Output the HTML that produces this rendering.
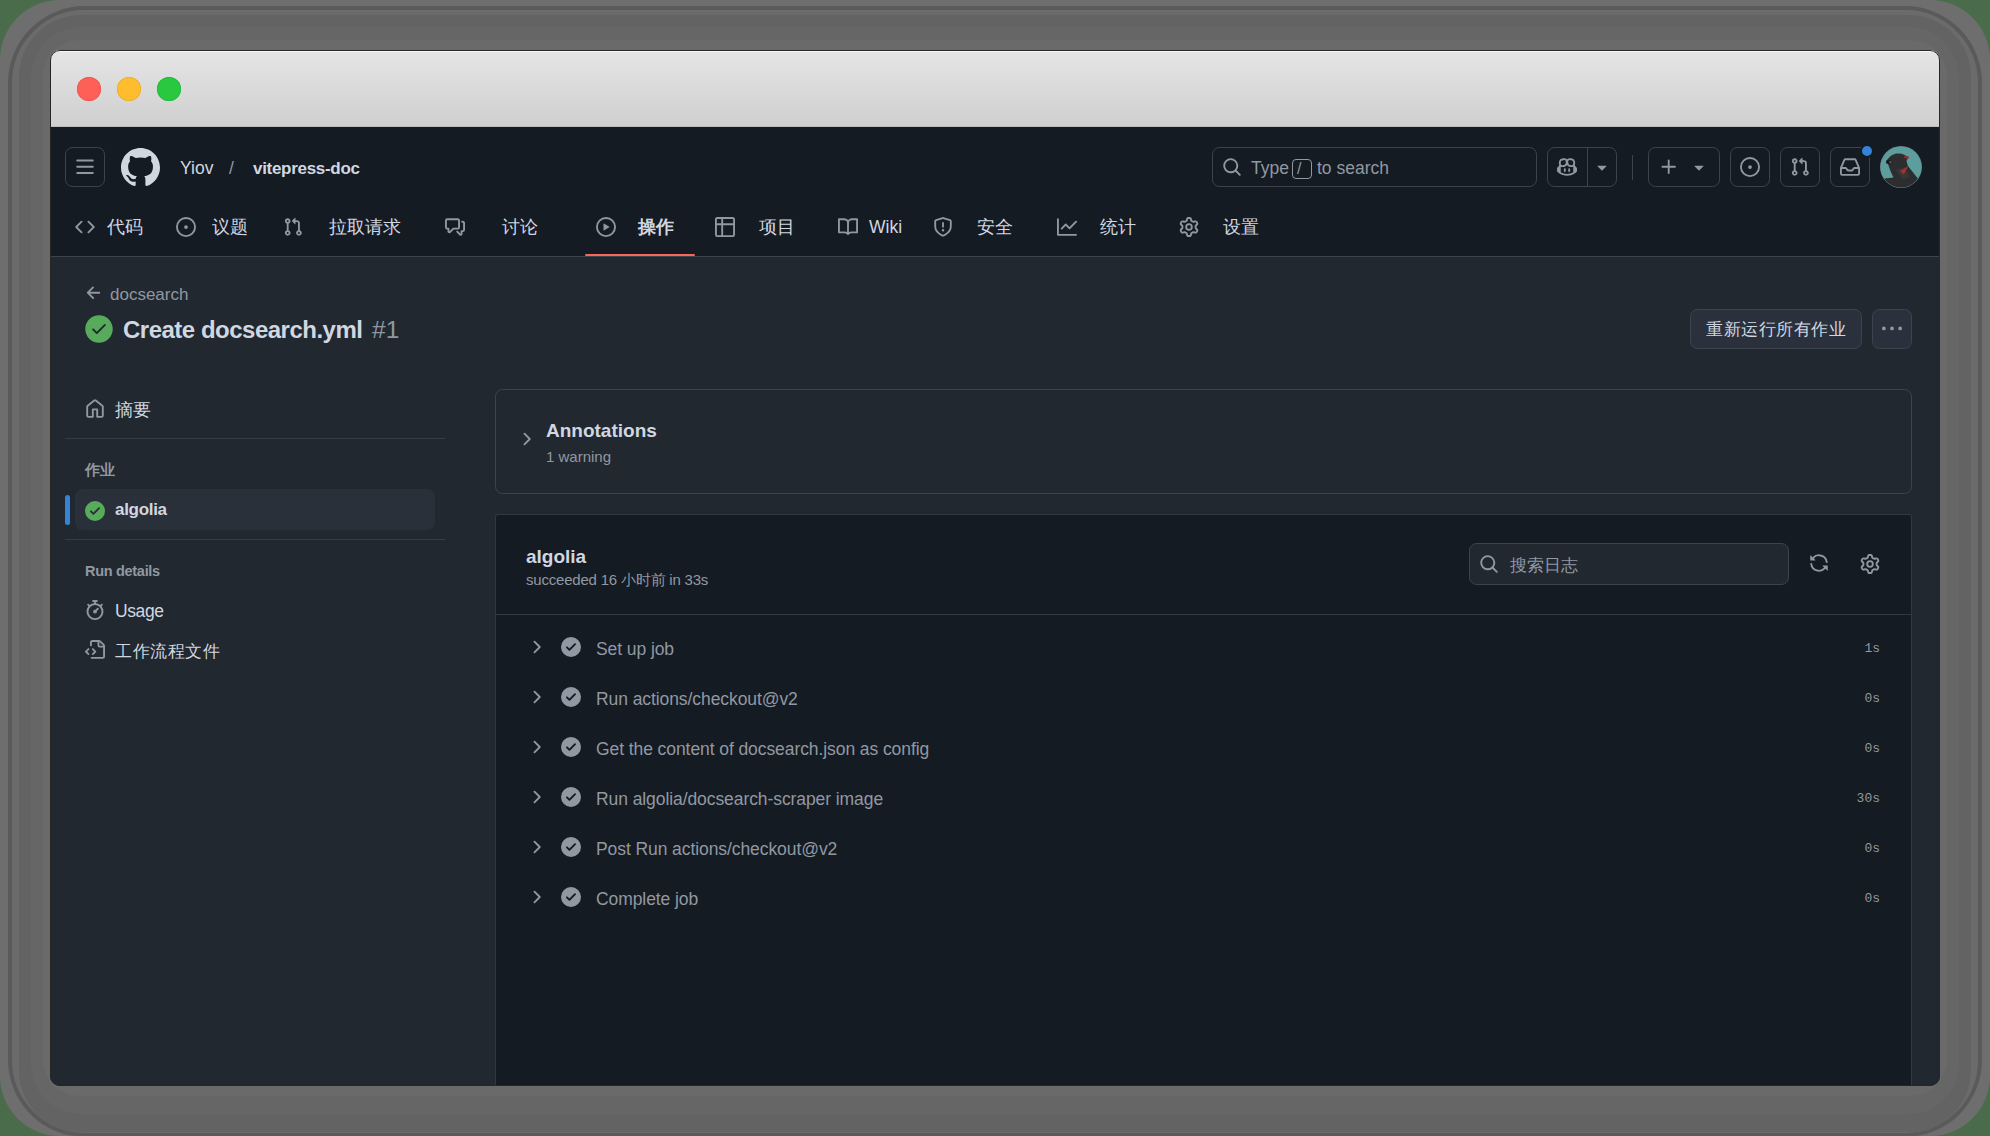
<!DOCTYPE html>
<html><head><meta charset="utf-8">
<style>
*{box-sizing:border-box;margin:0;padding:0}
html,body{width:1990px;height:1136px;overflow:hidden;background:#4b6c4b;font-family:"Liberation Sans",sans-serif}
#outer{position:absolute;left:0;top:0;width:1990px;height:1136px;border-radius:60px;background:#6e6e6e}
.lay{position:absolute}
#win{position:absolute;left:50px;top:50px;width:1890px;height:1036px;border-radius:10px;overflow:hidden;background:#212830;}
#wb{position:absolute;left:50px;top:50px;width:1890px;height:1036px;border-radius:10px;border:1px solid #262626}
#title{position:absolute;left:0;top:0;width:1890px;height:77px;background:linear-gradient(#e5e5e5,#cfcfcf);box-shadow:inset 0 2px 0 #f7f7f7,inset 0 -1px 0 #bdbdbd}
.tl{position:absolute;top:27px;width:24px;height:24px;border-radius:50%}
#hdr{position:absolute;left:0;top:77px;width:1890px;height:130px;background:#151b23;border-bottom:1px solid #3d444d}
.t{position:absolute;white-space:nowrap;line-height:1}
.fg{color:#d1d7e0}
.mu{color:#9198a1}
svg{position:absolute;display:block}
.btn{position:absolute;border:1px solid #3d444d;border-radius:7.5px}
.ic{fill:#9198a1}
</style></head>
<body>
<div id="outer"></div>
<div class="lay" style="left:12px;top:11px;width:1966px;height:1123px;border-radius:70px;background:#6b6b6b"></div>
<div class="lay" style="left:19px;top:15px;width:1952px;height:1117px;border-radius:62px;background:#636363"></div>
<div class="lay" style="left:31px;top:27px;width:1928px;height:1087px;border-radius:50px;background:#666666"></div>
<div class="lay" style="left:43px;top:40px;width:1904px;height:1056px;border-radius:36px;background:#6a6a6a"></div>
<div class="lay" style="left:8px;top:6px;width:1974px;height:1131px;border-radius:77px;border:4px solid #5a5a5a"></div>
<div id="win">
  <div id="title">
    <div class="tl" style="left:27px;background:#fe5f57;box-shadow:inset 0 0 0 0.7px #e8564e"></div>
    <div class="tl" style="left:67px;background:#febc2e;box-shadow:inset 0 0 0 0.7px #e6ac2a"></div>
    <div class="tl" style="left:107px;background:#28c840;box-shadow:inset 0 0 0 0.7px #24b53a"></div>
  </div>
  <div id="hdr"></div>
  <!-- log box -->
  <div style="position:absolute;left:445px;top:464px;width:1417px;height:600px;background:#151b23;border:1px solid rgba(61,68,77,0.7);border-radius:3px 3px 0 0"></div>
  <div style="position:absolute;left:445px;top:339px;width:1417px;height:105px;border:1px solid #3d444d;border-radius:7.5px"></div>
</div>

<div id="wb"></div>
<!-- HEADER -->
<div class="btn" style="left:65px;top:147px;width:40px;height:40px"></div>
<svg style="left:75px;top:157px" width="20" height="20" viewBox="0 0 16 16" class="ic"><path d="M1 2.75A.75.75 0 0 1 1.75 2h12.5a.75.75 0 0 1 0 1.5H1.75A.75.75 0 0 1 1 2.75Zm0 5A.75.75 0 0 1 1.75 7h12.5a.75.75 0 0 1 0 1.5H1.75A.75.75 0 0 1 1 7.75ZM1.75 12h12.5a.75.75 0 0 1 0 1.5H1.75a.75.75 0 0 1 0-1.5Z"/></svg>
<svg style="left:121px;top:148px" width="39" height="39" viewBox="0 0 16 16" fill="#d1d7e0"><path d="M8 0c4.42 0 8 3.58 8 8a8.013 8.013 0 0 1-5.45 7.590c-.4.08-.55-.17-.55-.38 0-.27.01-1.13.01-2.2 0-.75-.25-1.23-.54-1.48 1.78-.2 3.650-.88 3.650-3.950 0-.88-.31-1.590-.82-2.150.08-.2.36-1.020-.08-2.120 0 0-.67-.22-2.2.82-.64-.18-1.320-.27-2-.27-.68 0-1.360.09-2 .27-1.530-1.030-2.2-.82-2.2-.82-.44 1.1-.16 1.920-.08 2.120-.51.56-.82 1.280-.82 2.150 0 3.060 1.860 3.750 3.640 3.950-.23.2-.44.55-.51 1.070-.46.21-1.610.55-2.330-.66-.15-.24-.6-.83-1.230-.82-.67.01-.27.38.01.53.34.19.73.9.82 1.130.16.45.68 1.310 2.690.94 0 .67.01 1.3.01 1.490 0 .21-.15.45-.55.38A7.995 7.995 0 0 1 0 8c0-4.420 3.580-8 8-8Z"/></svg>
<div class="t fg" style="left:180px;top:160px;font-size:17.5px">Yiov</div>
<div class="t mu" style="left:229px;top:160px;font-size:17.5px">/</div>
<div class="t fg" style="left:253px;top:160px;font-size:17px;font-weight:700;letter-spacing:-0.3px">vitepress-doc</div>

<!-- search -->
<div class="btn" style="left:1212px;top:147px;width:325px;height:40px"></div>
<svg style="left:1222px;top:157px" width="20" height="20" viewBox="0 0 16 16" class="ic"><path d="M10.68 11.74a6 6 0 0 1-7.922-8.982 6 6 0 0 1 8.982 7.922l3.04 3.04a.749.749 0 0 1-.326 1.275.749.749 0 0 1-.734-.215ZM11.5 7a4.499 4.499 0 1 0-8.997 0A4.499 4.499 0 0 0 11.5 7Z"/></svg>
<div class="t mu" style="left:1251px;top:160px;font-size:17.5px">Type</div>
<div style="position:absolute;left:1292px;top:159px;width:20px;height:20px;border:1px solid #9198a1;border-radius:4px"></div>
<div class="t mu" style="left:1297px;top:161px;font-size:16px">/</div>
<div class="t mu" style="left:1317px;top:160px;font-size:17.5px">to search</div>

<div class="btn" style="left:1547px;top:147px;width:70px;height:40px"></div>
<div style="position:absolute;left:1587px;top:148px;width:1px;height:38px;background:#3d444d"></div>
<svg style="left:1557px;top:157px" width="20" height="20" viewBox="0 0 16 16" class="ic"><path d="M7.998 15.035c-4.562 0-7.873-2.914-7.998-3.749V9.338c.085-.628.677-1.686 1.588-2.065.013-.07.024-.143.036-.218.029-.183.06-.384.126-.612-.201-.508-.254-1.084-.254-1.656 0-.87.128-1.769.693-2.484.579-.733 1.494-1.124 2.724-1.261 1.206-.134 2.262.034 2.944.765.05.053.096.108.139.165.044-.057.094-.112.143-.165.682-.731 1.738-.899 2.944-.765 1.23.137 2.145.528 2.724 1.261.566.715.693 1.614.693 2.484 0 .572-.053 1.148-.254 1.656.066.228.098.429.126.612.012.076.024.148.037.218.924.385 1.522 1.471 1.591 2.095v1.872c0 .766-3.351 3.795-8.002 3.795Zm0-1.485c2.28 0 4.584-1.11 5.002-1.433V7.862l-.023-.116c-.49.21-1.075.291-1.727.291-1.146 0-2.059-.327-2.71-.991A3.222 3.222 0 0 1 8 6.303a3.24 3.24 0 0 1-.544.743c-.65.664-1.563.991-2.71.991-.652 0-1.236-.081-1.727-.291l-.023.116v4.255c.419.323 2.722 1.433 5.002 1.433ZM6.762 2.83c-.193-.206-.637-.413-1.682-.297-1.019.113-1.479.404-1.713.7-.247.312-.369.789-.369 1.554 0 .793.129 1.171.308 1.371.162.181.519.379 1.442.379.853 0 1.339-.235 1.638-.54.315-.322.527-.827.617-1.553.117-.935-.037-1.395-.241-1.614Zm4.155-.297c-1.044-.116-1.488.091-1.681.297-.204.219-.359.679-.242 1.614.091.726.303 1.231.618 1.553.299.305.784.54 1.638.54.922 0 1.280-.198 1.442-.379.179-.2.308-.578.308-1.371 0-.765-.123-1.242-.37-1.554-.233-.296-.693-.587-1.713-.7Z"/><path d="M6.25 9.037a.75.75 0 0 1 .75.75v1.501a.75.75 0 0 1-1.5 0V9.787a.75.75 0 0 1 .75-.75Zm4.25.75v1.501a.75.75 0 0 1-1.5 0V9.787a.75.75 0 0 1 1.5 0Z"/></svg>
<svg style="left:1592px;top:157px" width="20" height="20" viewBox="0 0 16 16" class="ic"><path d="m4.427 7.427 3.396 3.396a.25.25 0 0 0 .354 0l3.396-3.396A.25.25 0 0 0 11.396 7H4.604a.25.25 0 0 0-.177.427Z"/></svg>
<div style="position:absolute;left:1632px;top:155px;width:1px;height:25px;background:#3d444d"></div>

<div class="btn" style="left:1648px;top:147px;width:72px;height:40px"></div>
<svg style="left:1659px;top:157px" width="20" height="20" viewBox="0 0 16 16" class="ic"><path d="M7.75 2a.75.75 0 0 1 .75.75V7h4.250a.75.75 0 0 1 0 1.5H8.5v4.250a.75.75 0 0 1-1.5 0V8.5H2.750a.75.75 0 0 1 0-1.5H7V2.750A.75.75 0 0 1 7.75 2Z"/></svg>
<svg style="left:1689px;top:157px" width="20" height="20" viewBox="0 0 16 16" class="ic"><path d="m4.427 7.427 3.396 3.396a.25.25 0 0 0 .354 0l3.396-3.396A.25.25 0 0 0 11.396 7H4.604a.25.25 0 0 0-.177.427Z"/></svg>

<div class="btn" style="left:1730px;top:147px;width:40px;height:40px"></div>
<svg style="left:1740px;top:157px" width="20" height="20" viewBox="0 0 16 16" class="ic"><path d="M8 9.5a1.5 1.5 0 1 0 0-3 1.5 1.5 0 0 0 0 3Z"/><path d="M8 0a8 8 0 1 1 0 16A8 8 0 0 1 8 0ZM1.5 8a6.5 6.5 0 1 0 13 0 6.5 6.5 0 0 0-13 0Z"/></svg>
<div class="btn" style="left:1780px;top:147px;width:40px;height:40px"></div>
<svg style="left:1790px;top:157px" width="20" height="20" viewBox="0 0 16 16" class="ic"><path d="M1.5 3.25a2.25 2.25 0 1 1 3 2.122v5.256a2.251 2.251 0 1 1-1.5 0V5.372A2.25 2.25 0 0 1 1.5 3.25Zm5.677-.177L9.573.677A.25.25 0 0 1 10 .854V2.5h1A2.5 2.5 0 0 1 13.5 5v5.628a2.251 2.251 0 1 1-1.5 0V5a1 1 0 0 0-1-1h-1v1.646a.25.25 0 0 1-.427.177L7.177 3.427a.25.25 0 0 1 0-.354ZM3.75 2.5a.75.75 0 1 0 0 1.5.75.75 0 0 0 0-1.5Zm0 9.5a.75.75 0 1 0 0 1.5.75.75 0 0 0 0-1.5Zm8.25.75a.75.75 0 1 0 1.5 0 .75.75 0 0 0-1.5 0Z"/></svg>
<div class="btn" style="left:1830px;top:147px;width:40px;height:40px"></div>
<svg style="left:1840px;top:157px" width="20" height="20" viewBox="0 0 16 16" class="ic"><path d="M2.8 2.06A1.75 1.75 0 0 1 4.41 1h7.18c.7 0 1.333.417 1.61 1.06l2.74 6.395c.04.093.06.194.06.295v4.5A1.75 1.75 0 0 1 14.25 15H1.75A1.75 1.75 0 0 1 0 13.25v-4.5c0-.101.02-.202.06-.295Zm1.61.44a.25.25 0 0 0-.23.152L1.887 8H4.75a.75.75 0 0 1 .6.3L6.625 10h2.75l1.275-1.7a.75.75 0 0 1 .6-.3h2.863L11.82 2.652a.25.25 0 0 0-.23-.152Zm10.09 7h-2.875l-1.275 1.7a.75.75 0 0 1-.6.3h-3.5a.75.75 0 0 1-.6-.3L4.375 9.5H1.5v3.75c0 .138.112.25.25.25h12.5a.25.25 0 0 0 .25-.25Z"/></svg>
<div style="position:absolute;left:1860px;top:144px;width:14px;height:14px;border-radius:50%;background:#3483d9;border:2px solid #151b23"></div>
<svg style="left:1880px;top:146px" width="42" height="42" viewBox="0 0 42 42">
<defs><clipPath id="avc"><circle cx="21" cy="21" r="20.5"/></clipPath></defs>
<circle cx="21" cy="21" r="21" fill="#6f747c"/>
<g clip-path="url(#avc)">
<rect width="42" height="42" fill="#5c9e9e"/>
<path d="M6.5 15 C8 12 12 8 17 7.5 C22 7 26 9 28 11.5 L26.5 15 C27 17 27.5 18.5 28 20 L37 31.5 L42 36 L42 42 L0 42 L0 33 L13.5 31.5 C11 27 9.5 22 8.2 18.5 Z" fill="#2d2d2f"/>
<path d="M15.5 24 L25 21 L30 31 L23 34 Z" fill="#363638"/>
<path d="M20.1 24.9 L28.4 19.9 L23.8 28.6 Z" fill="#a5302c"/>
<path d="M24 10 L29 10.5 L28.5 12.8 L24 12 Z" fill="#8e2f2a"/>
<rect x="6.2" y="14.6" width="4.8" height="3" fill="#111"/>
<rect x="9.4" y="15.6" width="1.6" height="1" fill="#aaa"/>
</g>
</svg>

<!-- NAV -->
<svg style="left:75px;top:217px" width="20" height="20" viewBox="0 0 16 16" class="ic"><path d="m11.28 3.22 4.25 4.25a.75.75 0 0 1 0 1.06l-4.25 4.25a.749.749 0 0 1-1.275-.326.749.749 0 0 1 .215-.734L13.94 8l-3.72-3.72a.749.749 0 0 1 .326-1.275.749.749 0 0 1 .734.215Zm-6.56 0a.751.751 0 0 1 1.042.018.751.751 0 0 1 .018 1.042L2.06 8l3.72 3.72a.749.749 0 0 1-.326 1.275.749.749 0 0 1-.734-.215L.47 8.53a.75.75 0 0 1 0-1.06Z"/></svg>
<div class="t fg" style="left:107px;top:219px;font-size:17.5px">代码</div>
<svg style="left:176px;top:217px" width="20" height="20" viewBox="0 0 16 16" class="ic"><path d="M8 9.5a1.5 1.5 0 1 0 0-3 1.5 1.5 0 0 0 0 3Z"/><path d="M8 0a8 8 0 1 1 0 16A8 8 0 0 1 8 0ZM1.5 8a6.5 6.5 0 1 0 13 0 6.5 6.5 0 0 0-13 0Z"/></svg>
<div class="t fg" style="left:212px;top:219px;font-size:17.5px">议题</div>
<svg style="left:283px;top:217px" width="20" height="20" viewBox="0 0 16 16" class="ic"><path d="M1.5 3.25a2.25 2.25 0 1 1 3 2.122v5.256a2.251 2.251 0 1 1-1.5 0V5.372A2.25 2.25 0 0 1 1.5 3.25Zm5.677-.177L9.573.677A.25.25 0 0 1 10 .854V2.5h1A2.5 2.5 0 0 1 13.5 5v5.628a2.251 2.251 0 1 1-1.5 0V5a1 1 0 0 0-1-1h-1v1.646a.25.25 0 0 1-.427.177L7.177 3.427a.25.25 0 0 1 0-.354ZM3.75 2.5a.75.75 0 1 0 0 1.5.75.75 0 0 0 0-1.5Zm0 9.5a.75.75 0 1 0 0 1.5.75.75 0 0 0 0-1.5Zm8.25.75a.75.75 0 1 0 1.5 0 .75.75 0 0 0-1.5 0Z"/></svg>
<div class="t fg" style="left:329px;top:219px;font-size:17.5px">拉取请求</div>
<svg style="left:445px;top:217px" width="20" height="20" viewBox="0 0 16 16" class="ic"><path d="M1.75 1h8.5c.966 0 1.75.784 1.75 1.75v5.5A1.75 1.75 0 0 1 10.25 10H7.061l-2.574 2.573A1.458 1.458 0 0 1 2 11.543V10h-.25A1.75 1.75 0 0 1 0 8.25v-5.5C0 1.784.784 1 1.75 1ZM1.5 2.75v5.5c0 .138.112.25.25.25h1a.75.75 0 0 1 .75.75v2.19l2.72-2.72a.749.749 0 0 1 .53-.22h3.5a.25.25 0 0 0 .25-.25v-5.5a.25.25 0 0 0-.25-.25h-8.5a.25.25 0 0 0-.25.25Zm13 2a.25.25 0 0 0-.25-.25h-.5a.75.75 0 0 1 0-1.5h.5c.966 0 1.75.784 1.75 1.75v5.5A1.75 1.75 0 0 1 14.25 12H14v1.543a1.458 1.458 0 0 1-2.487 1.03L9.22 12.28a.749.749 0 0 1 .326-1.275.749.749 0 0 1 .734.215l2.22 2.22v-2.19a.75.75 0 0 1 .75-.75h1a.25.25 0 0 0 .25-.25Z"/></svg>
<div class="t fg" style="left:502px;top:219px;font-size:17.5px">讨论</div>
<svg style="left:596px;top:217px" width="20" height="20" viewBox="0 0 16 16" class="ic"><path d="M8 0a8 8 0 1 1 0 16A8 8 0 0 1 8 0ZM1.5 8a6.5 6.5 0 1 0 13 0 6.5 6.5 0 0 0-13 0Zm4.879-2.773 4.264 2.559a.25.25 0 0 1 0 .428l-4.264 2.559A.25.25 0 0 1 6 10.559V5.442a.25.25 0 0 1 .379-.215Z"/></svg>
<div class="t fg" style="left:638px;top:219px;font-size:17.5px;font-weight:700">操作</div>
<div style="position:absolute;left:585px;top:253.5px;width:110px;height:2.6px;border-radius:2px;background:#f8675a"></div>
<svg style="left:715px;top:217px" width="20" height="20" viewBox="0 0 16 16" class="ic"><path d="M0 1.75C0 .784.784 0 1.75 0h12.5C15.216 0 16 .784 16 1.75v12.5A1.75 1.75 0 0 1 14.25 16H1.75A1.75 1.75 0 0 1 0 14.25ZM6.5 6.5v8h7.75a.25.25 0 0 0 .25-.25V6.5Zm8-1.5V1.75a.25.25 0 0 0-.25-.25H6.5V5Zm-13 1.5v7.75c0 .138.112.25.25.25H5v-8ZM5 5V1.5H1.75a.25.25 0 0 0-.25.25V5Z"/></svg>
<div class="t fg" style="left:759px;top:219px;font-size:17.5px">项目</div>
<svg style="left:838px;top:217px" width="20" height="20" viewBox="0 0 16 16" class="ic"><path d="M0 1.75A.75.75 0 0 1 .75 1h4.253c1.227 0 2.317.59 3 1.501A3.743 3.743 0 0 1 11.006 1h4.245a.75.75 0 0 1 .75.75v10.5a.75.75 0 0 1-.75.75h-4.507a2.25 2.25 0 0 0-1.591.659l-.622.621a.75.75 0 0 1-1.06 0l-.622-.621A2.25 2.25 0 0 0 5.258 13H.75a.75.75 0 0 1-.75-.75Zm7.251 10.324.004-5.073-.002-2.253A2.25 2.25 0 0 0 5.003 2.5H1.5v9h3.757a3.75 3.75 0 0 1 1.994.574ZM8.755 4.75l-.004 7.322a3.752 3.752 0 0 1 1.992-.572H14.5v-9h-3.495a2.25 2.25 0 0 0-2.25 2.25Z"/></svg>
<div class="t fg" style="left:869px;top:219px;font-size:17.5px">Wiki</div>
<svg style="left:933px;top:217px" width="20" height="20" viewBox="0 0 16 16" class="ic"><path d="M7.467.133a1.748 1.748 0 0 1 1.066 0l5.25 1.68A1.75 1.75 0 0 1 15 3.48V7c0 1.566-.32 3.182-1.303 4.682-.983 1.498-2.585 2.813-5.032 3.855a1.697 1.697 0 0 1-1.33 0c-2.447-1.042-4.049-2.357-5.032-3.855C1.32 10.182 1 8.566 1 7V3.48a1.755 1.755 0 0 1 1.217-1.667Zm.61 1.429a.25.25 0 0 0-.153 0l-5.25 1.68a.25.25 0 0 0-.174.238V7c0 1.358.275 2.666 1.057 3.86.784 1.194 2.121 2.34 4.366 3.297a.196.196 0 0 0 .154 0c2.245-.956 3.582-2.104 4.366-3.298C13.225 9.666 13.5 8.36 13.5 7V3.48a.251.251 0 0 0-.174-.237l-5.25-1.68ZM8.75 4.75v3a.75.75 0 0 1-1.5 0v-3a.75.75 0 0 1 1.5 0ZM9 10.5a1 1 0 1 1-2 0 1 1 0 0 1 2 0Z"/></svg>
<div class="t fg" style="left:977px;top:219px;font-size:17.5px">安全</div>
<svg style="left:1057px;top:217px" width="20" height="20" viewBox="0 0 16 16" class="ic"><path d="M1.5 1.75V13.5h13.75a.75.75 0 0 1 0 1.5H.75a.75.75 0 0 1-.75-.75V1.75a.75.75 0 0 1 1.5 0Zm14.28 2.53-5.25 5.25a.75.75 0 0 1-1.06 0L7 7.06 4.28 9.78a.751.751 0 0 1-1.042-.018.751.751 0 0 1-.018-1.042l3.25-3.25a.75.75 0 0 1 1.06 0L10 7.94l4.72-4.72a.751.751 0 0 1 1.042.018.751.751 0 0 1 .018 1.042Z"/></svg>
<div class="t fg" style="left:1100px;top:219px;font-size:17.5px">统计</div>
<svg style="left:1179px;top:217px" width="20" height="20" viewBox="0 0 16 16" class="ic" id="gear1"><path d="M8 0a8.2 8.2 0 0 1 .701.031C9.444.095 9.99.645 10.16 1.29l.288 1.107c.018.066.079.158.212.224.231.114.454.243.668.386.123.082.233.09.299.071l1.103-.303c.644-.176 1.392.021 1.82.63.27.385.506.792.704 1.218.315.675.111 1.422-.364 1.891l-.814.806c-.049.048-.098.147-.088.294.016.257.016.515 0 .772-.01.147.038.246.088.294l.814.806c.475.469.679 1.216.364 1.891a7.977 7.977 0 0 1-.704 1.217c-.428.61-1.176.807-1.82.63l-1.102-.302c-.067-.019-.177-.011-.3.071a5.909 5.909 0 0 1-.668.386c-.133.066-.194.158-.211.224l-.29 1.106c-.168.646-.715 1.196-1.458 1.26a8.006 8.006 0 0 1-1.402 0c-.743-.064-1.289-.614-1.458-1.26l-.289-1.106c-.018-.066-.079-.158-.212-.224a5.738 5.738 0 0 1-.668-.386c-.123-.082-.233-.09-.299-.071l-1.103.303c-.644.176-1.392-.021-1.82-.63a8.12 8.12 0 0 1-.704-1.218c-.315-.675-.111-1.422.363-1.891l.815-.806c.05-.048.098-.147.088-.294a6.214 6.214 0 0 1 0-.772c.01-.147-.038-.246-.088-.294l-.815-.806C.635 6.045.431 5.298.746 4.623a7.92 7.92 0 0 1 .704-1.217c.428-.61 1.176-.807 1.82-.63l1.102.302c.067.019.177.011.3-.071.214-.143.437-.272.668-.386.133-.066.194-.158.211-.224l.29-1.106C6.009.645 6.556.095 7.299.03 7.530.01 7.764 0 8 0Zm-.571 1.525c-.036.003-.108.036-.137.146l-.289 1.105c-.147.561-.549.967-.998 1.189-.173.086-.34.183-.5.29-.417.278-.97.423-1.529.27l-1.103-.303c-.109-.03-.175.016-.195.045-.22.312-.412.644-.573.99-.014.031-.021.11.059.19l.815.806c.411.406.562.957.53 1.456a4.709 4.709 0 0 0 0 .582c.032.499-.119 1.05-.53 1.456l-.815.806c-.081.08-.073.159-.059.19.162.346.353.677.573.989.02.03.085.076.195.046l1.102-.303c.56-.153 1.113-.008 1.53.27.161.107.328.204.501.29.447.222.85.629.997 1.189l.289 1.105c.029.109.101.143.137.146a6.6 6.6 0 0 0 1.142 0c.036-.003.108-.036.137-.146l.289-1.105c.147-.561.549-.967.998-1.189.173-.086.34-.183.5-.29.417-.278.97-.423 1.529-.27l1.103.303c.109.029.175-.016.195-.045.22-.313.411-.644.573-.99.014-.031.021-.11-.059-.19l-.815-.806c-.411-.406-.562-.957-.53-1.456a4.709 4.709 0 0 0 0-.582c-.032-.499.119-1.05.53-1.456l.815-.806c.081-.08.073-.159.059-.19a6.464 6.464 0 0 0-.573-.989c-.02-.03-.085-.076-.195-.046l-1.102.303c-.56.153-1.113.008-1.53-.27a4.440 4.440 0 0 0-.501-.29c-.447-.222-.85-.629-.997-1.189l-.289-1.105c-.029-.11-.101-.143-.137-.146a6.6 6.6 0 0 0-1.142 0ZM11 8a3 3 0 1 1-6 0 3 3 0 0 1 6 0ZM9.5 8a1.5 1.5 0 1 0-3.001.001A1.5 1.5 0 0 0 9.5 8Z"/></svg>
<div class="t fg" style="left:1223px;top:219px;font-size:17.5px">设置</div>

<!-- PAGE TITLE -->
<svg style="left:84px;top:283px" width="20" height="20" viewBox="0 0 16 16" class="ic"><path d="M7.78 12.53a.75.75 0 0 1-1.06 0L2.47 8.28a.75.75 0 0 1 0-1.06l4.25-4.25a.751.751 0 0 1 1.042.018.751.751 0 0 1 .018 1.042L4.81 7h7.44a.75.75 0 0 1 0 1.5H4.81l2.97 2.97a.75.75 0 0 1 0 1.06Z"/></svg>
<div class="t mu" style="left:110px;top:286px;font-size:17px">docsearch</div>
<svg style="left:84px;top:314px" width="30" height="30" viewBox="0 0 24 24" fill="#57ab5a"><path d="M1 12C1 5.925 5.925 1 12 1s11 4.925 11 11-4.925 11-11 11S1 18.075 1 12Zm16.28-2.72a.751.751 0 0 0-.018-1.042.751.751 0 0 0-1.042-.018l-5.970 5.970-2.470-2.470a.751.751 0 0 0-1.042.018.751.751 0 0 0-.018 1.042l3 3a.75.75 0 0 0 1.060 0Z"/></svg>
<div class="t fg" style="left:123px;top:318px;font-size:24px;font-weight:700;letter-spacing:-0.5px">Create docsearch.yml</div>
<div class="t mu" style="left:372px;top:318px;font-size:24.5px">#1</div>

<div class="btn" style="left:1690px;top:309px;width:172px;height:40px;background:#2a313c"></div>
<div class="t fg" style="left:1706px;top:321px;font-size:17px;letter-spacing:0.5px">重新运行所有作业</div>
<div class="btn" style="left:1872px;top:309px;width:40px;height:40px;background:#2a313c"></div>
<svg style="left:1882px;top:319px" width="20" height="20" viewBox="0 0 16 16" class="ic"><path d="M8 9a1.5 1.5 0 1 0 0-3 1.5 1.5 0 0 0 0 3ZM1.5 9a1.5 1.5 0 1 0 0-3 1.5 1.5 0 0 0 0 3Zm13 0a1.5 1.5 0 1 0 0-3 1.5 1.5 0 0 0 0 3Z"/></svg>

<!-- SIDEBAR -->
<svg style="left:85px;top:399px" width="20" height="20" viewBox="0 0 16 16" class="ic"><path d="M6.906.664a1.749 1.749 0 0 1 2.187 0l5.25 4.2c.415.332.657.835.657 1.367v7.019A1.75 1.75 0 0 1 13.25 15h-3.5a.75.75 0 0 1-.75-.75V9H7v5.25a.75.75 0 0 1-.75.75h-3.5A1.75 1.75 0 0 1 1 13.25V6.23c0-.531.242-1.034.657-1.366l5.25-4.2Zm1.25 1.171a.25.25 0 0 0-.312 0l-5.25 4.2a.25.25 0 0 0-.094.196v7.019c0 .138.112.25.25.25H5.5V8.25a.75.75 0 0 1 .75-.75h3.5a.75.75 0 0 1 .75.75v5.25h2.75a.25.25 0 0 0 .25-.25V6.23a.25.25 0 0 0-.094-.195Z"/></svg>
<div class="t fg" style="left:115px;top:401.5px;font-size:17.5px">摘要</div>
<div style="position:absolute;left:65px;top:438px;width:380px;height:1px;background:rgba(61,68,77,0.7)"></div>
<div class="t mu" style="left:85px;top:462px;font-size:15px;font-weight:700">作业</div>
<div style="position:absolute;left:75px;top:489px;width:360px;height:41px;border-radius:7.5px;background:#29303a"></div>
<div style="position:absolute;left:65px;top:495px;width:5px;height:30px;border-radius:3px;background:#3483d9"></div>
<svg style="left:85px;top:501px" width="20" height="20" viewBox="0 0 16 16" fill="#57ab5a"><path d="M8 16A8 8 0 1 1 8 0a8 8 0 0 1 0 16Zm3.78-9.72a.751.751 0 0 0-.018-1.042.751.751 0 0 0-1.042-.018L6.75 9.19 5.28 7.72a.751.751 0 0 0-1.042.018.751.751 0 0 0-.018 1.042l2 2a.75.75 0 0 0 1.06 0Z"/></svg>
<div class="t fg" style="left:115px;top:501px;font-size:17px;font-weight:700;letter-spacing:-0.3px">algolia</div>
<div style="position:absolute;left:65px;top:539px;width:380px;height:1px;background:rgba(61,68,77,0.7)"></div>
<div class="t mu" style="left:85px;top:564px;font-size:14.5px;font-weight:700;letter-spacing:-0.3px">Run details</div>
<svg style="left:85px;top:600px" width="20" height="20" viewBox="0 0 16 16" class="ic"><path d="M5.75.75A.75.75 0 0 1 6.5 0h3a.75.75 0 0 1 0 1.5h-.75v1l-.001.041a6.724 6.724 0 0 1 3.464 1.435l.007-.006.75-.75a.751.751 0 0 1 1.042.018.751.751 0 0 1 .018 1.042l-.75.75-.006.007a6.75 6.75 0 1 1-10.548 0L2.72 5.030l-.75-.75a.751.751 0 0 1 .018-1.042.751.751 0 0 1 1.042-.018l.75.75.007.006A6.72 6.72 0 0 1 7.25 2.541V1.5H6.5a.75.75 0 0 1-.75-.75ZM8 14.5A5.25 5.25 0 1 0 8 4a5.25 5.25 0 0 0 0 10.5Zm.389-6.7 1.33-1.33a.75.75 0 1 1 1.061 1.06L9.45 8.861A1.503 1.503 0 0 1 8 10.75a1.499 1.499 0 1 1 .389-2.950Z"/></svg>
<div class="t fg" style="left:115px;top:603px;font-size:17.5px;letter-spacing:-0.4px">Usage</div>
<svg style="left:85px;top:640px" width="20" height="20" viewBox="0 0 16 16" class="ic"><path d="M4 1.75C4 .784 4.784 0 5.75 0h5.586c.464 0 .909.184 1.237.513l2.914 2.914c.329.328.513.773.513 1.237v8.586A1.75 1.75 0 0 1 14.25 15h-9a.75.75 0 0 1 0-1.5h9a.25.25 0 0 0 .25-.25V6h-2.75A1.75 1.75 0 0 1 10 4.25V1.5H5.75a.25.25 0 0 0-.25.25v2.5a.75.75 0 0 1-1.5 0Zm1.72 4.97a.75.75 0 0 1 1.06 0l2 2a.75.75 0 0 1 0 1.06l-2 2a.749.749 0 0 1-1.275-.326.749.749 0 0 1 .215-.734l1.47-1.47-1.47-1.47a.75.75 0 0 1 0-1.06ZM3.28 7.78 1.81 9.25l1.47 1.47a.751.751 0 0 1-.018 1.042.751.751 0 0 1-1.042.018l-2-2a.75.75 0 0 1 0-1.06l2-2a.751.751 0 0 1 1.042.018.751.751 0 0 1 .018 1.042Zm8.22-6.218V4.25c0 .138.112.25.25.25h2.688l-.011-.013-2.914-2.914-.013-.011Z"/></svg>
<div class="t fg" style="left:115px;top:642.5px;font-size:17px;letter-spacing:0.5px">工作流程文件</div>

<!-- ANNOTATIONS -->
<svg style="left:516px;top:429px" width="20" height="20" viewBox="0 0 16 16" class="ic"><path d="M6.22 3.22a.75.75 0 0 1 1.06 0l4.25 4.25a.75.75 0 0 1 0 1.06l-4.25 4.25a.751.751 0 0 1-1.042-.018.751.751 0 0 1-.018-1.042L9.94 8 6.22 4.28a.75.75 0 0 1 0-1.06Z"/></svg>
<div class="t fg" style="left:546px;top:421px;font-size:19px;font-weight:700">Annotations</div>
<div class="t mu" style="left:546px;top:449px;font-size:15px">1 warning</div>

<!-- LOG HEADER -->
<div class="t fg" style="left:526px;top:546.5px;font-size:19px;font-weight:700">algolia</div>
<div class="t mu" style="left:526px;top:572px;font-size:15px;letter-spacing:-0.2px">succeeded 16 小时前 in 33s</div>
<div class="btn" style="left:1469px;top:543px;width:320px;height:42px;background:#212830"></div>
<svg style="left:1479px;top:554px" width="20" height="20" viewBox="0 0 16 16" class="ic"><path d="M10.68 11.74a6 6 0 0 1-7.922-8.982 6 6 0 0 1 8.982 7.922l3.04 3.04a.749.749 0 0 1-.326 1.275.749.749 0 0 1-.734-.215ZM11.5 7a4.499 4.499 0 1 0-8.997 0A4.499 4.499 0 0 0 11.5 7Z"/></svg>
<div class="t mu" style="left:1510px;top:556.5px;font-size:17px">搜索日志</div>
<svg style="left:1809px;top:553px" width="20" height="20" viewBox="0 0 16 16" class="ic"><path d="M1.705 8.005a.75.75 0 0 1 .834.656 5.5 5.5 0 0 0 9.592 2.97l-1.204-1.204a.25.25 0 0 1 .177-.427h3.646a.25.25 0 0 1 .25.25v3.646a.25.25 0 0 1-.427.177l-1.38-1.38A7.002 7.002 0 0 1 1.05 8.84a.75.75 0 0 1 .656-.834ZM8 2.5a5.487 5.487 0 0 0-4.131 1.869l1.204 1.204A.25.25 0 0 1 4.896 6H1.25A.25.25 0 0 1 1 5.75V2.104a.25.25 0 0 1 .427-.177l1.38 1.38A7.002 7.002 0 0 1 14.95 7.16a.75.75 0 0 1-1.49.178A5.5 5.5 0 0 0 8 2.5Z"/></svg>
<svg style="left:1860px;top:554px" width="20" height="20" viewBox="0 0 16 16" class="ic"><path d="M8 0a8.2 8.2 0 0 1 .701.031C9.444.095 9.99.645 10.16 1.29l.288 1.107c.018.066.079.158.212.224.231.114.454.243.668.386.123.082.233.09.299.071l1.103-.303c.644-.176 1.392.021 1.82.63.27.385.506.792.704 1.218.315.675.111 1.422-.364 1.891l-.814.806c-.049.048-.098.147-.088.294.016.257.016.515 0 .772-.01.147.038.246.088.294l.814.806c.475.469.679 1.216.364 1.891a7.977 7.977 0 0 1-.704 1.217c-.428.61-1.176.807-1.82.63l-1.102-.302c-.067-.019-.177-.011-.3.071a5.909 5.909 0 0 1-.668.386c-.133.066-.194.158-.211.224l-.29 1.106c-.168.646-.715 1.196-1.458 1.26a8.006 8.006 0 0 1-1.402 0c-.743-.064-1.289-.614-1.458-1.26l-.289-1.106c-.018-.066-.079-.158-.212-.224a5.738 5.738 0 0 1-.668-.386c-.123-.082-.233-.09-.299-.071l-1.103.303c-.644.176-1.392-.021-1.82-.63a8.12 8.12 0 0 1-.704-1.218c-.315-.675-.111-1.422.363-1.891l.815-.806c.05-.048.098-.147.088-.294a6.214 6.214 0 0 1 0-.772c.01-.147-.038-.246-.088-.294l-.815-.806C.635 6.045.431 5.298.746 4.623a7.92 7.92 0 0 1 .704-1.217c.428-.61 1.176-.807 1.82-.63l1.102.302c.067.019.177.011.3-.071.214-.143.437-.272.668-.386.133-.066.194-.158.211-.224l.29-1.106C6.009.645 6.556.095 7.299.03 7.530.01 7.764 0 8 0Zm-.571 1.525c-.036.003-.108.036-.137.146l-.289 1.105c-.147.561-.549.967-.998 1.189-.173.086-.34.183-.5.29-.417.278-.97.423-1.529.27l-1.103-.303c-.109-.03-.175.016-.195.045-.22.312-.412.644-.573.99-.014.031-.021.11.059.19l.815.806c.411.406.562.957.53 1.456a4.709 4.709 0 0 0 0 .582c.032.499-.119 1.05-.53 1.456l-.815.806c-.081.08-.073.159-.059.19.162.346.353.677.573.989.02.03.085.076.195.046l1.102-.303c.56-.153 1.113-.008 1.53.27.161.107.328.204.501.29.447.222.85.629.997 1.189l.289 1.105c.029.109.101.143.137.146a6.6 6.6 0 0 0 1.142 0c.036-.003.108-.036.137-.146l.289-1.105c.147-.561.549-.967.998-1.189.173-.086.34-.183.5-.29.417-.278.97-.423 1.529-.27l1.103.303c.109.029.175-.016.195-.045.22-.313.411-.644.573-.99.014-.031.021-.11-.059-.19l-.815-.806c-.411-.406-.562-.957-.53-1.456a4.709 4.709 0 0 0 0-.582c-.032-.499.119-1.05.53-1.456l.815-.806c.081-.08.073-.159.059-.19a6.464 6.464 0 0 0-.573-.989c-.02-.03-.085-.076-.195-.046l-1.102.303c-.56.153-1.113.008-1.53-.27a4.440 4.440 0 0 0-.501-.29c-.447-.222-.85-.629-.997-1.189l-.289-1.105c-.029-.11-.101-.143-.137-.146a6.6 6.6 0 0 0-1.142 0ZM11 8a3 3 0 1 1-6 0 3 3 0 0 1 6 0ZM9.5 8a1.5 1.5 0 1 0-3.001.001A1.5 1.5 0 0 0 9.5 8Z"/></svg>
<div style="position:absolute;left:496px;top:614px;width:1415px;height:1px;background:rgba(61,68,77,0.7)"></div>

<svg style="left:526px;top:637px" width="20" height="20" viewBox="0 0 16 16" class="ic"><path d="M6.22 3.22a.75.75 0 0 1 1.06 0l4.25 4.25a.75.75 0 0 1 0 1.06l-4.25 4.25a.751.751 0 0 1-1.042-.018.751.751 0 0 1-.018-1.042L9.94 8 6.22 4.28a.75.75 0 0 1 0-1.06Z"/></svg>
<svg style="left:561px;top:637px" width="20" height="20" viewBox="0 0 16 16" class="ic"><path d="M8 16A8 8 0 1 1 8 0a8 8 0 0 1 0 16Zm3.78-9.72a.751.751 0 0 0-.018-1.042.751.751 0 0 0-1.042-.018L6.75 9.19 5.28 7.72a.751.751 0 0 0-1.042.018.751.751 0 0 0-.018 1.042l2 2a.75.75 0 0 0 1.06 0Z"/></svg>
<div class="t mu" style="left:596px;top:641px;font-size:17.5px;letter-spacing:-0.08px">Set up job</div>
<div class="t mu" style="right:110px;top:642px;font-size:13px;font-family:'Liberation Mono',monospace">1s</div>
<svg style="left:526px;top:687px" width="20" height="20" viewBox="0 0 16 16" class="ic"><path d="M6.22 3.22a.75.75 0 0 1 1.06 0l4.25 4.25a.75.75 0 0 1 0 1.06l-4.25 4.25a.751.751 0 0 1-1.042-.018.751.751 0 0 1-.018-1.042L9.94 8 6.22 4.28a.75.75 0 0 1 0-1.06Z"/></svg>
<svg style="left:561px;top:687px" width="20" height="20" viewBox="0 0 16 16" class="ic"><path d="M8 16A8 8 0 1 1 8 0a8 8 0 0 1 0 16Zm3.78-9.72a.751.751 0 0 0-.018-1.042.751.751 0 0 0-1.042-.018L6.75 9.19 5.28 7.72a.751.751 0 0 0-1.042.018.751.751 0 0 0-.018 1.042l2 2a.75.75 0 0 0 1.06 0Z"/></svg>
<div class="t mu" style="left:596px;top:691px;font-size:17.5px;letter-spacing:-0.08px">Run actions/checkout@v2</div>
<div class="t mu" style="right:110px;top:692px;font-size:13px;font-family:'Liberation Mono',monospace">0s</div>
<svg style="left:526px;top:737px" width="20" height="20" viewBox="0 0 16 16" class="ic"><path d="M6.22 3.22a.75.75 0 0 1 1.06 0l4.25 4.25a.75.75 0 0 1 0 1.06l-4.25 4.25a.751.751 0 0 1-1.042-.018.751.751 0 0 1-.018-1.042L9.94 8 6.22 4.28a.75.75 0 0 1 0-1.06Z"/></svg>
<svg style="left:561px;top:737px" width="20" height="20" viewBox="0 0 16 16" class="ic"><path d="M8 16A8 8 0 1 1 8 0a8 8 0 0 1 0 16Zm3.78-9.72a.751.751 0 0 0-.018-1.042.751.751 0 0 0-1.042-.018L6.75 9.19 5.28 7.72a.751.751 0 0 0-1.042.018.751.751 0 0 0-.018 1.042l2 2a.75.75 0 0 0 1.06 0Z"/></svg>
<div class="t mu" style="left:596px;top:741px;font-size:17.5px;letter-spacing:-0.08px">Get the content of docsearch.json as config</div>
<div class="t mu" style="right:110px;top:742px;font-size:13px;font-family:'Liberation Mono',monospace">0s</div>
<svg style="left:526px;top:787px" width="20" height="20" viewBox="0 0 16 16" class="ic"><path d="M6.22 3.22a.75.75 0 0 1 1.06 0l4.25 4.25a.75.75 0 0 1 0 1.06l-4.25 4.25a.751.751 0 0 1-1.042-.018.751.751 0 0 1-.018-1.042L9.94 8 6.22 4.28a.75.75 0 0 1 0-1.06Z"/></svg>
<svg style="left:561px;top:787px" width="20" height="20" viewBox="0 0 16 16" class="ic"><path d="M8 16A8 8 0 1 1 8 0a8 8 0 0 1 0 16Zm3.78-9.72a.751.751 0 0 0-.018-1.042.751.751 0 0 0-1.042-.018L6.75 9.19 5.28 7.72a.751.751 0 0 0-1.042.018.751.751 0 0 0-.018 1.042l2 2a.75.75 0 0 0 1.06 0Z"/></svg>
<div class="t mu" style="left:596px;top:791px;font-size:17.5px;letter-spacing:-0.08px">Run algolia/docsearch-scraper image</div>
<div class="t mu" style="right:110px;top:792px;font-size:13px;font-family:'Liberation Mono',monospace">30s</div>
<svg style="left:526px;top:837px" width="20" height="20" viewBox="0 0 16 16" class="ic"><path d="M6.22 3.22a.75.75 0 0 1 1.06 0l4.25 4.25a.75.75 0 0 1 0 1.06l-4.25 4.25a.751.751 0 0 1-1.042-.018.751.751 0 0 1-.018-1.042L9.94 8 6.22 4.28a.75.75 0 0 1 0-1.06Z"/></svg>
<svg style="left:561px;top:837px" width="20" height="20" viewBox="0 0 16 16" class="ic"><path d="M8 16A8 8 0 1 1 8 0a8 8 0 0 1 0 16Zm3.78-9.72a.751.751 0 0 0-.018-1.042.751.751 0 0 0-1.042-.018L6.75 9.19 5.28 7.72a.751.751 0 0 0-1.042.018.751.751 0 0 0-.018 1.042l2 2a.75.75 0 0 0 1.06 0Z"/></svg>
<div class="t mu" style="left:596px;top:841px;font-size:17.5px;letter-spacing:-0.08px">Post Run actions/checkout@v2</div>
<div class="t mu" style="right:110px;top:842px;font-size:13px;font-family:'Liberation Mono',monospace">0s</div>
<svg style="left:526px;top:887px" width="20" height="20" viewBox="0 0 16 16" class="ic"><path d="M6.22 3.22a.75.75 0 0 1 1.06 0l4.25 4.25a.75.75 0 0 1 0 1.06l-4.25 4.25a.751.751 0 0 1-1.042-.018.751.751 0 0 1-.018-1.042L9.94 8 6.22 4.28a.75.75 0 0 1 0-1.06Z"/></svg>
<svg style="left:561px;top:887px" width="20" height="20" viewBox="0 0 16 16" class="ic"><path d="M8 16A8 8 0 1 1 8 0a8 8 0 0 1 0 16Zm3.78-9.72a.751.751 0 0 0-.018-1.042.751.751 0 0 0-1.042-.018L6.75 9.19 5.28 7.72a.751.751 0 0 0-1.042.018.751.751 0 0 0-.018 1.042l2 2a.75.75 0 0 0 1.06 0Z"/></svg>
<div class="t mu" style="left:596px;top:891px;font-size:17.5px;letter-spacing:-0.08px">Complete job</div>
<div class="t mu" style="right:110px;top:892px;font-size:13px;font-family:'Liberation Mono',monospace">0s</div>
</body></html>
